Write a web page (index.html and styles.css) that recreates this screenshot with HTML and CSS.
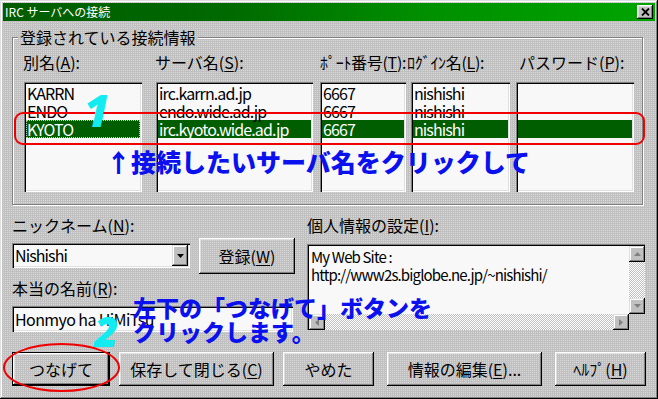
FILE: index.html
```html
<!DOCTYPE html>
<html lang="ja">
<head>
<meta charset="utf-8">
<title>IRC サーバへの接続</title>
<link rel="stylesheet" href="styles.css">
</head>
<body>
<div class="window">
  <div class="titlebar">
    <span class="title">IRC サーバへの接続</span>
    <span class="close"><svg width="9" height="8" viewBox="0 0 9 8"><path d="M1 0.5 L8 7.5 M8 0.5 L1 7.5" stroke="#000" stroke-width="1.8"/></svg></span>
  </div>
  <div class="client">
    <fieldset class="group">
      <legend>登録されている接続情報</legend>
      <div class="cols">
        <div class="col">
          <div class="lbl l1">別名(<u>A</u>):</div>
          <div class="list">
            <div class="row">KARRN</div>
            <div class="row">ENDO</div>
            <div class="row sel focus">KYOTO</div>
          </div>
        </div>
        <div class="col">
          <div class="lbl l2">サーバ名(<u>S</u>):</div>
          <div class="list">
            <div class="row">irc.karrn.ad.jp</div>
            <div class="row">endo.wide.ad.jp</div>
            <div class="row sel">irc.kyoto.wide.ad.jp</div>
          </div>
        </div>
        <div class="col">
          <div class="lbl l3">ﾎﾟｰﾄ番号(<u>T</u>):</div>
          <div class="list">
            <div class="row">6667</div>
            <div class="row">6667</div>
            <div class="row sel">6667</div>
          </div>
        </div>
        <div class="col">
          <div class="lbl l4">ﾛｸﾞｲﾝ名(<u>L</u>):</div>
          <div class="list">
            <div class="row">nishishi</div>
            <div class="row">nishishi</div>
            <div class="row sel">nishishi</div>
          </div>
        </div>
        <div class="col">
          <div class="lbl l5">パスワード(<u>P</u>):</div>
          <div class="list">
            <div class="row"></div>
            <div class="row"></div>
            <div class="row sel"></div>
          </div>
        </div>
      </div>
    </fieldset>

    <div class="mid">
      <div class="left">
        <div class="lbl">ニックネーム(<u>N</u>):</div>
        <div class="nickrow">
          <div class="combo">
            <span class="combo-text">Nishishi</span>
            <span class="dd"><svg width="7" height="4" viewBox="0 0 7 4"><path d="M0 0h7L3.5 4z" fill="#000"/></svg></span>
          </div>
          <div class="btn reg">登録(<u>W</u>)</div>
        </div>
        <div class="lbl real">本当の名前(<u>R</u>):</div>
        <div class="field">Honmyo ha HiMiTsu</div>
      </div>
      <div class="right">
        <div class="lbl">個人情報の設定(<u>I</u>):</div>
        <div class="memo">
          <div class="memo-text">My Web Site :<br>http://www2s.biglobe.ne.jp/~nishishi/</div>
          <div class="vscroll">
            <span class="sbtn"><svg width="7" height="4" viewBox="0 0 7 4"><path d="M3.5 0L7 4H0z" fill="#808080"/></svg></span>
            <span class="track"></span>
            <span class="sbtn"><svg width="7" height="4" viewBox="0 0 7 4"><path d="M0 0h7L3.5 4z" fill="#808080"/></svg></span>
          </div>
          <div class="hscroll">
            <span class="sbtn"><svg width="4" height="7" viewBox="0 0 4 7"><path d="M4 0v7L0 3.5z" fill="#808080"/></svg></span>
            <span class="track"></span>
            <span class="sbtn"><svg width="4" height="7" viewBox="0 0 4 7"><path d="M0 0v7L4 3.5z" fill="#808080"/></svg></span>
          </div>
        </div>
      </div>
    </div>

    <div class="buttons">
      <div class="btn default b1">つなげて</div>
      <div class="btn b2">保存して閉じる(<u>C</u>)</div>
      <div class="btn b3">やめた</div>
      <div class="btn b4">情報の編集(<u>E</u>)...</div>
      <div class="btn b5">ﾍﾙﾌﾟ(<u>H</u>)</div>
    </div>
  </div>

  <div class="mark rect"></div>
  <div class="num n1">1</div>
  <div class="note note1">↑接続したいサーバ名をクリックして</div>
  <div class="num n2">2</div>
  <div class="note note2">左下の「つなげて」ボタンを<br>クリックします。</div>
  <div class="mark ellipse"></div>
</div>
</body>
</html>
```

FILE: styles.css
```css
* { box-sizing: border-box; }
html, body { margin: 0; padding: 0; }
body {
  width: 658px;
  height: 399px;
  overflow: hidden;
  background: #c0c0c0;
  font-family: "Noto Sans CJK JP", "Noto Sans", sans-serif;
  font-size: 16px;
  color: #000;
}
u { text-decoration: underline; text-underline-offset: 2px; }

.window {
  position: relative;
  width: 658px;
  height: 399px;
  padding: 3px;
  background-color: #c0c0c0;
  background-image: repeating-conic-gradient(#d8d8d8 0 25%, #c0c0c0 0 100%);
  background-size: 2px 2px;
  box-shadow: inset -1px -1px #000, inset 1px 1px #dfdfdf, inset -2px -2px #808080, inset 2px 2px #fff;
}

.titlebar {
  height: 18px;
  display: flex;
  align-items: center;
  justify-content: space-between;
  padding: 0 2px 0 2px;
  background: linear-gradient(to right, #005c00 0%, #006a00 35%, #009000 65%, #00a400 100%);
}
.title {
  color: #fff;
  font-size: 12px;
  line-height: 14px;
}
.close {
  width: 16px;
  height: 14px;
  display: flex;
  align-items: center;
  justify-content: center;
  background: #c0c0c0;
  box-shadow: inset -1px -1px #000, inset 1px 1px #fff, inset -2px -2px #808080, inset 2px 2px #dfdfdf;
}

.client {
  padding: 0 9px;
}

.group {
  margin: 7px 0 0 0;
  width: 631px;
  padding: 7px 8px 12px 11px;
  min-width: 0;
  border: 1px solid #808080;
  box-shadow: 1px 1px 0 #fff, inset 1px 1px 0 #fff;
}
.group legend {
  margin-left: -6px;
  padding: 0 2px;
  line-height: 18px;
  font-size: 16px;
  background-color: #c0c0c0;
  background-image: repeating-conic-gradient(#d8d8d8 0 25%, #c0c0c0 0 100%);
  background-size: 2px 2px;
}

.cols {
  display: grid;
  grid-template-columns: 132px 164px 91px 105px 118px;
}
.col:nth-child(1) .list { width: 118px; }
.col:nth-child(2) .list { width: 157px; }
.col:nth-child(3) .list { width: 86px; }
.col:nth-child(4) .list { width: 99px; }
.col:nth-child(5) .list { width: 118px; }

.lbl {
  line-height: 18px;
  white-space: nowrap;
}
.cols .lbl { margin-bottom: 11px; }
.l1 { margin-left: -1px; }
.l2 { margin-left: -1px; }
.l3 { letter-spacing: -0.3px; }
.l4 { margin-left: -4px; letter-spacing: -0.3px; }
.l5 { margin-left: 3px; }

.list {
  height: 110px;
  padding: 2px;
  background: #f8f8f8;
  box-shadow: inset 1px 1px #808080, inset 2px 2px #000, inset -1px -1px #fff, inset -2px -2px #dfdfdf;
}
.row {
  height: 18px;
  line-height: 18px;
  padding-left: 1px;
  white-space: nowrap;
  letter-spacing: -0.9px;
}
.row.sel {
  background: #005e00;
  color: #fff;
}
.row.focus {
  outline: 1px dotted #b8d0b8;
  outline-offset: -1px;
}

.mid {
  margin-top: 11px;
  display: flex;
  gap: 12px;
}
.left { width: 283px; }
.right { width: 338px; }

.nickrow {
  margin-top: 4px;
  display: flex;
  align-items: flex-start;
  gap: 9px;
}
.combo {
  margin-top: 5px;
  width: 178px;
  height: 25px;
  padding: 2px;
  display: flex;
  background: #f8f8f8;
  box-shadow: inset 1px 1px #808080, inset 2px 2px #000, inset -1px -1px #fff, inset -2px -2px #dfdfdf;
}
.combo-text {
  flex: 1;
  line-height: 21px;
  padding-left: 1px;
  letter-spacing: -0.9px;
}
.dd {
  width: 16px;
  height: 21px;
  display: flex;
  align-items: center;
  justify-content: center;
  background: #c0c0c0;
  box-shadow: inset -1px -1px #000, inset 1px 1px #dfdfdf, inset -2px -2px #808080, inset 2px 2px #fff;
}

.btn {
  display: flex;
  align-items: center;
  justify-content: center;
  white-space: nowrap;
  background-color: #c0c0c0;
  background-image: repeating-conic-gradient(#d8d8d8 0 25%, #c0c0c0 0 100%);
  background-size: 2px 2px;
  box-shadow: inset -1px -1px #000, inset 1px 1px #fff, inset -2px -2px #808080, inset 2px 2px #dfdfdf;
  line-height: 18px;
}
.reg { width: 96px; height: 36px; }

.real { margin-top: 5px; }
.field {
  margin-top: 9px;
  width: 281px;
  height: 26px;
  padding: 2px 0 0 3px;
  line-height: 22px;
  letter-spacing: -0.6px;
  background: #f8f8f8;
  box-shadow: inset 1px 1px #808080, inset 2px 2px #000, inset -1px -1px #fff, inset -2px -2px #dfdfdf;
}

.memo {
  margin-top: 10px;
  width: 338px;
  height: 86px;
  padding: 2px 0 0 2px;
  display: grid;
  grid-template-columns: 1fr 16px;
  grid-template-rows: 1fr 16px;
  box-shadow: inset 1px 1px #808080, inset 2px 2px #000;
}
.memo-text {
  background: #f8f8f8;
  padding: 2px 0 0 2px;
  font-size: 15px;
  line-height: 18px;
  letter-spacing: -0.85px;
  white-space: nowrap;
}
.vscroll {
  display: flex;
  flex-direction: column;
}
.hscroll {
  display: flex;
}
.track {
  flex: 1;
  background: repeating-conic-gradient(#ffffff 0 25%, #c0c0c0 0 50%);
  background-size: 2px 2px;
}
.sbtn {
  width: 16px;
  height: 16px;
  flex: none;
  display: flex;
  align-items: center;
  justify-content: center;
  background: #c0c0c0;
  box-shadow: inset -1px -1px #000, inset 1px 1px #dfdfdf, inset -2px -2px #808080, inset 2px 2px #fff;
}

.buttons {
  margin-top: 20px;
  display: flex;
}
.buttons .btn { height: 34px; }
.b1 { width: 98px; }
.b2 { width: 155px; margin-left: 9px; }
.b3 { width: 91px; margin-left: 9px; }
.b4 { width: 155px; margin-left: 13px; }
.b5 { width: 91px; margin-left: 13px; }
.btn.default {
  box-shadow: inset 0 0 0 1px #000, inset -2px -2px #000, inset 2px 2px #fff, inset -3px -3px #808080, inset 3px 3px #dfdfdf;
}

/* annotations drawn over the dialog */
.mark {
  position: absolute;
  border: 2px solid #f00000;
}
.rect {
  left: 14px;
  top: 112px;
  width: 631px;
  height: 33px;
  border-radius: 9px;
}
.ellipse {
  left: 3px;
  top: 343px;
  width: 117px;
  height: 49px;
  border-radius: 50%;
}
.num {
  position: absolute;
  font-family: "Noto Sans", sans-serif;
  font-weight: 900;
  font-style: italic;
  color: #12ecf0;
  line-height: 1;
}
.n1 { left: 84px; top: 88px; font-size: 44px; }
.n2 { left: 94px; top: 310px; font-size: 42px; }
.note {
  position: absolute;
  font-family: "Noto Sans CJK JP", sans-serif;
  font-weight: 900;
  color: #0a10ee;
  white-space: nowrap;
}
.note1 {
  left: 106px;
  top: 146px;
  font-size: 25px;
  line-height: 30px;
}
.note2 {
  left: 133px;
  top: 295px;
  font-size: 23px;
  line-height: 24px;
}
```
